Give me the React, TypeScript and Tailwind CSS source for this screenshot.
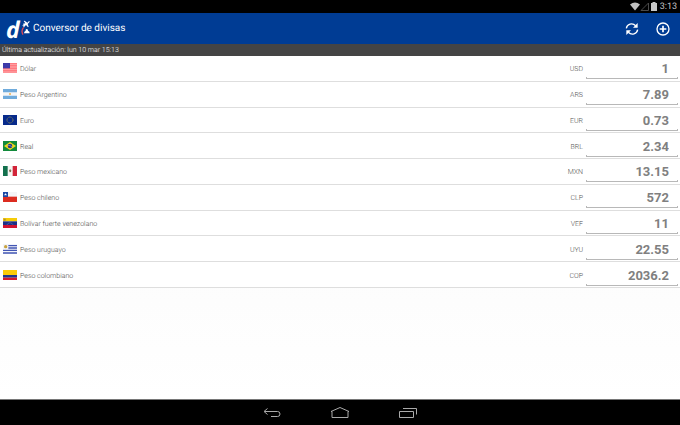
import type { ReactNode } from "react";

type Currency = { code: string; name: string; value: string; flag: ReactNode };

const currencies: Currency[] = [
  {
    code: "USD",
    name: "Dólar",
    value: "1",
    flag: (
      <>
        <rect width="42" height="30" fill="#ffb4b4" />
        <path d="M0 2h42M0 7h42M0 12h42M0 17h42M0 22h42M0 27h42" stroke="#ff7078" strokeWidth="3" />
        <rect width="21" height="16" fill="#3a38a8" />
        <path d="M2 4h18M2 8h18M2 12h18" stroke="#6a68c4" strokeWidth="1" strokeDasharray="1 2" />
      </>
    ),
  },
  {
    code: "ARS",
    name: "Peso Argentino",
    value: "7.89",
    flag: (
      <>
        <rect width="42" height="30" fill="#f4f6f8" />
        <path d="M0 5h42M0 25h42" stroke="#6fabdc" strokeWidth="10" />
        <circle cx="21" cy="15" r="3" fill="#eeb050" />
      </>
    ),
  },
  {
    code: "EUR",
    name: "Euro",
    value: "0.73",
    flag: (
      <>
        <rect width="42" height="30" fill="#072b8c" />
        <circle cx="21" cy="15" r="9" fill="none" stroke="#8c8a55" strokeWidth="3" strokeDasharray="3 1.7" />
      </>
    ),
  },
  {
    code: "BRL",
    name: "Real",
    value: "2.34",
    flag: (
      <>
        <rect width="42" height="30" fill="#128a3c" />
        <path d="M21 3l18 12-18 12L3 15z" fill="#f2d51c" />
        <circle cx="21" cy="15" r="7" fill="#263c88" />
        <path d="M14 13q8-1 13 5" fill="none" stroke="#b8c4dc" strokeWidth="1.5" />
      </>
    ),
  },
  {
    code: "MXN",
    name: "Peso mexicano",
    value: "13.15",
    flag: (
      <>
        <rect width="42" height="30" fill="#f6f6f4" />
        <rect width="14" height="30" fill="#13704d" />
        <rect x="29" width="13" height="30" fill="#d22439" />
        <path d="M18 12l4-2 3 3-1 5-4 1-1-3z" fill="#8a7250" />
      </>
    ),
  },
  {
    code: "CLP",
    name: "Peso chileno",
    value: "572",
    flag: (
      <>
        <rect width="42" height="30" fill="#f4f4f6" />
        <rect y="14" width="42" height="16" fill="#dc2c20" />
        <rect width="15" height="15" fill="#1c48a4" />
        <path d="M7.500 3l1.300 3h3l-2.400 2 1 3.200-2.900-2-2.900 2 1-3.200-2.400-2h3z" fill="#fff" />
      </>
    ),
  },
  {
    code: "VEF",
    name: "Bolívar fuerte venezolano",
    value: "11",
    flag: (
      <>
        <rect width="42" height="10" fill="#f6cc08" />
        <rect y="10" width="42" height="11" fill="#1c3088" />
        <rect y="21" width="42" height="9" fill="#d01430" />
        <rect x="2" y="2" width="6" height="6" fill="#b08c38" />
        <path d="M13 19q8-9 16 0" fill="none" stroke="#b4bcd8" strokeWidth="2" strokeDasharray="2 2" />
      </>
    ),
  },
  {
    code: "UYU",
    name: "Peso uruguayo",
    value: "22.55",
    flag: (
      <>
        <rect width="42" height="30" fill="#f2f4fa" />
        <path d="M0 5h42M0 12h42M0 19h42M0 27h42" stroke="#4356b4" strokeWidth="4" />
        <rect width="16" height="16" fill="#f2f4fa" />
        <circle cx="8" cy="8" r="5" fill="#c8a440" />
      </>
    ),
  },
  {
    code: "COP",
    name: "Peso colombiano",
    value: "2036.2",
    flag: (
      <>
        <rect width="42" height="15" fill="#fccc08" />
        <rect y="15" width="42" height="8" fill="#20388c" />
        <rect y="23" width="42" height="7" fill="#d41c2c" />
      </>
    ),
  },
];

const StatusBar = () => (
  <div className="flex h-[13px] shrink-0 items-center justify-end bg-black pr-[3px] text-[#c8c8c8]">
    <svg viewBox="0 0 28 13" className="h-[13px] w-[28px]">
      <path d="M1 4.500Q6 .5 11 4.500L6 10.500z" fill="#c0c0c0" />
      <path d="M19.500 3v7.500H12z" fill="none" stroke="#4a4a4a" />
      <path d="M22 3h1.500V2h3v1H28v8h-6z" fill="#c8c8c8" />
    </svg>
    <span className="ml-[3px] pt-px text-[9px] leading-[12px]">3:13</span>
  </div>
);

const Header = () => (
  <header className="flex h-[31px] shrink-0 items-center bg-[#003c94] pl-[6px] text-white">
    <div className="mr-[3px] flex items-center">
      <span className="w-[14px] font-['Open_Sans',sans-serif] text-[23px] leading-[30px] font-bold italic">d</span>
      <svg viewBox="0 0 30 54" className="h-[18px] w-[10px]">
        <path d="M9 11l7-1-5-7 3-1 8 6 5-5 2 1-1 3-5 5 3 8-2 2-6-7-5 5-1 3-2-4-4-2 5-1z" fill="#fff" />
        <path d="M11 22q-9 10-2 22" fill="none" stroke="#e04452" strokeWidth="4" />
        <path d="M20 27q-4 1-3 5-5 2-5 8h17q1-6-5-8 1-4-4-5z" fill="#fff" />
      </svg>
    </div>
    <h1 className="flex-1 pt-px text-[10px] leading-[30px]">Conversor de divisas</h1>
    <button type="button" aria-label="Actualizar" className="mr-[17px]">
      <svg viewBox="0 0 42 42" className="size-[14px]" fill="none" stroke="#fff" strokeWidth="4">
        <path d="M4 19c2-13 18-18 28-8M38 23c-2 13-18 18-28 8" />
        <path d="M38 3v14H24zM4 39V25h14z" fill="#fff" stroke="none" />
      </svg>
    </button>
    <button type="button" aria-label="Agregar divisa" className="mr-[10px]">
      <svg viewBox="0 0 42 42" className="size-[14px]" fill="none" stroke="#fff" strokeWidth="4">
        <circle cx="21" cy="21" r="18" />
        <path d="M21 11v20M11 21h20" strokeWidth="5" />
      </svg>
    </button>
  </header>
);

const CurrencyRow = ({ code, name, value, flag }: Currency) => (
  <li className="flex items-center border-b border-[#dedede] bg-white pr-[2px] pl-[3px]">
    <svg viewBox="0 0 42 30" className="h-[10px] w-[14px]" preserveAspectRatio="none">
      {flag}
    </svg>
    <label htmlFor={code} className="ml-[3px] flex flex-1 justify-between pt-[2px] text-[7px] leading-[10px] font-light text-[#505050]">
      <span>{name}</span>
      <span>{code}</span>
    </label>
    <div className="relative ml-[3px] w-[92px]">
      <input
        id={code}
        defaultValue={value}
        inputMode="decimal"
        className="block h-[22px] w-full bg-transparent pt-px pr-[9px] text-right text-[13px] leading-[21px] font-bold text-[#808080] outline-none"
      />
      {/* bracket underline of the field */}
      <div className="pointer-events-none absolute inset-x-0 bottom-0 h-[2px] border-x border-b border-[#b8b8b8]" />
    </div>
  </li>
);

const NavBar = () => (
  <nav className="flex h-[26px] shrink-0 items-center justify-center gap-[48px] border-t border-[#777] bg-black">
    <button type="button" aria-label="Atrás">
      <svg viewBox="0 0 20 14" className="h-[14px] w-[20px]" fill="none" stroke="#aaa">
        <path d="M5.500 2.500l-3.500 3 3.500 3M2.500 5.500h13q2.500 0 2.500 2.500t-2.500 2.500H9" />
      </svg>
    </button>
    <button type="button" aria-label="Inicio">
      <svg viewBox="0 0 20 14" className="h-[14px] w-[20px]" fill="none" stroke="#aaa">
        <path d="M1 5.500l9-4 9 4h-1v6H2v-6z" />
      </svg>
    </button>
    <button type="button" aria-label="Recientes">
      <svg viewBox="0 0 20 14" className="h-[14px] w-[20px]" fill="none" stroke="#aaa">
        <path d="M1.500 5.500h14v6h-14zM5 2.500h13.500v6" />
      </svg>
    </button>
  </nav>
);

const App = () => {
  return (
    <div className="flex min-h-screen flex-col bg-black font-[Roboto,sans-serif] [text-rendering:geometricPrecision]">
      <StatusBar />
      <Header />
      <p className="h-[12px] shrink-0 bg-[#444] pl-[2px] text-[7px] leading-[12px] font-light text-white">
        Última actualización: lun 10 mar 15:13
      </p>
      <main className="flex-1 bg-linear-to-b from-[#f8f8f8] to-white">
        <ul className="grid h-58 auto-rows-fr">
          {currencies.map((currency) => (
            <CurrencyRow key={currency.code} {...currency} />
          ))}
        </ul>
      </main>
      <NavBar />
    </div>
  );
};

export default App;
